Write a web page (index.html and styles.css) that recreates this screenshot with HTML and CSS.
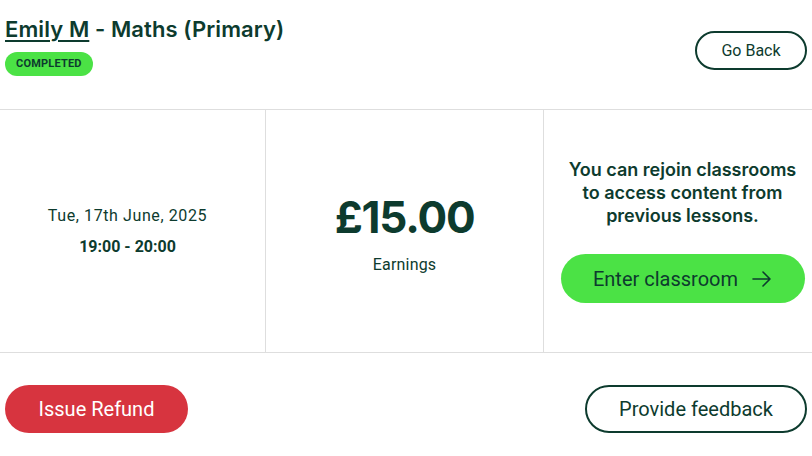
FILE: index.html
```html
<!DOCTYPE html>
<html lang="en">
<head>
  <meta charset="UTF-8">
  <meta name="viewport" content="width=device-width, initial-scale=1.0">
  <title>Lesson – Emily M</title>
  <link rel="stylesheet" href="styles.css">
</head>
<body>
  <header class="top">
    <div class="title-block">
      <h1><a href="#" class="student">Emily M</a> - Maths (Primary)</h1>
      <span class="badge">COMPLETED</span>
    </div>
    <button class="btn btn-outline back">Go Back</button>
  </header>

  <section class="summary">
    <div class="cell cell-date">
      <p class="date">Tue, 17th June, 2025</p>
      <p class="time">19:00 - 20:00</p>
    </div>
    <div class="cell">
      <p class="amount">£15.00</p>
      <p class="label">Earnings</p>
    </div>
    <div class="cell cell-classroom">
      <p class="note">You can rejoin classrooms to access content from previous lessons.</p>
      <button class="btn btn-green">
        Enter classroom
        <svg width="20" height="16" viewBox="0 0 20 16" fill="none" stroke="currentColor" stroke-width="1.6" stroke-linecap="round" stroke-linejoin="round">
          <path d="M1 8h17M11 1l7 7-7 7"/>
        </svg>
      </button>
    </div>
  </section>

  <footer class="actions">
    <button class="btn btn-red">Issue Refund</button>
    <button class="btn btn-outline feedback">Provide feedback</button>
  </footer>
</body>
</html>
```

FILE: styles.css
```css
body {
  font-family: Roboto, "Liberation Sans", sans-serif;
  color: #0d3b2e;
  background: #fff;
  margin: 0;
  padding: 0;
}
p {
  margin: 0;
}
.top {
  display: flex;
  justify-content: space-between;
  align-items: flex-start;
  padding: 14px 5px 0 5px;
  height: 95px;
  border-bottom: 1px solid #dedede;
}
h1 {
  font-family: Inter, "Noto Sans", sans-serif;
  font-size: 22px;
  font-weight: 600;
  margin: 0;
  line-height: 30px;
  letter-spacing: 0.1px;
}
.student {
  color: inherit;
  text-decoration: underline;
  text-underline-offset: 3px;
  text-decoration-thickness: 2px;
}
.badge {
  display: inline-block;
  margin-top: 8px;
  background: #4be245;
  color: #0d3b2e;
  font-size: 11px;
  font-weight: 700;
  padding: 0 11px;
  line-height: 24px;
  border-radius: 12px;
  letter-spacing: 0.2px;
}
.btn {
  font-family: Roboto, "Liberation Sans", sans-serif;
  border-radius: 999px;
  cursor: pointer;
  display: inline-flex;
  align-items: center;
  justify-content: center;
}
.btn-outline {
  background: #fff;
  border: 2px solid #0d3b2e;
  color: #0d3b2e;
}
.back {
  margin-top: 17px;
  width: 112px;
  height: 39px;
  font-size: 16px;
}
.summary {
  display: grid;
  grid-template-columns: 266px 278px 1fr;
  height: 242px;
  border-bottom: 1px solid #dedede;
}
.cell {
  display: flex;
  flex-direction: column;
  align-items: center;
  justify-content: center;
  border-right: 1px solid #dedede;
  text-align: center;
}
.cell:last-child {
  border-right: none;
}
.cell-date {
  padding-right: 10px;
}
.date {
  font-size: 16px;
  line-height: 20px;
  letter-spacing: 0.6px;
}
.time {
  font-size: 16px;
  font-weight: 700;
  margin-top: 11px;
}
.amount {
  font-family: Inter, "Noto Sans", sans-serif;
  font-size: 44px;
  font-weight: 700;
  line-height: 50px;
  margin-top: 4px;
  letter-spacing: -1.2px;
}
.label {
  font-size: 16px;
  margin-top: 13px;
  letter-spacing: 0.2px;
}
.cell-classroom {
  padding: 48px 7px 0 16px;
  justify-content: flex-start;
  box-sizing: border-box;
}
.note {
  font-family: Inter, "Noto Sans", sans-serif;
  font-size: 18px;
  font-weight: 600;
  line-height: 23px;
  padding: 0 2px;
}
.btn-green {
  margin-top: 27px;
  width: 244px;
  height: 49px;
  border: none;
  background: #4be245;
  color: #0d3b2e;
  font-size: 20px;
  gap: 14px;
}
.actions {
  display: flex;
  justify-content: space-between;
  padding: 32px 5px 0 5px;
}
.btn-red {
  width: 183px;
  height: 48px;
  border: none;
  background: #d7343f;
  color: #fff;
  font-size: 20px;
}
.feedback {
  width: 222px;
  height: 48px;
  font-size: 20px;
}
```
